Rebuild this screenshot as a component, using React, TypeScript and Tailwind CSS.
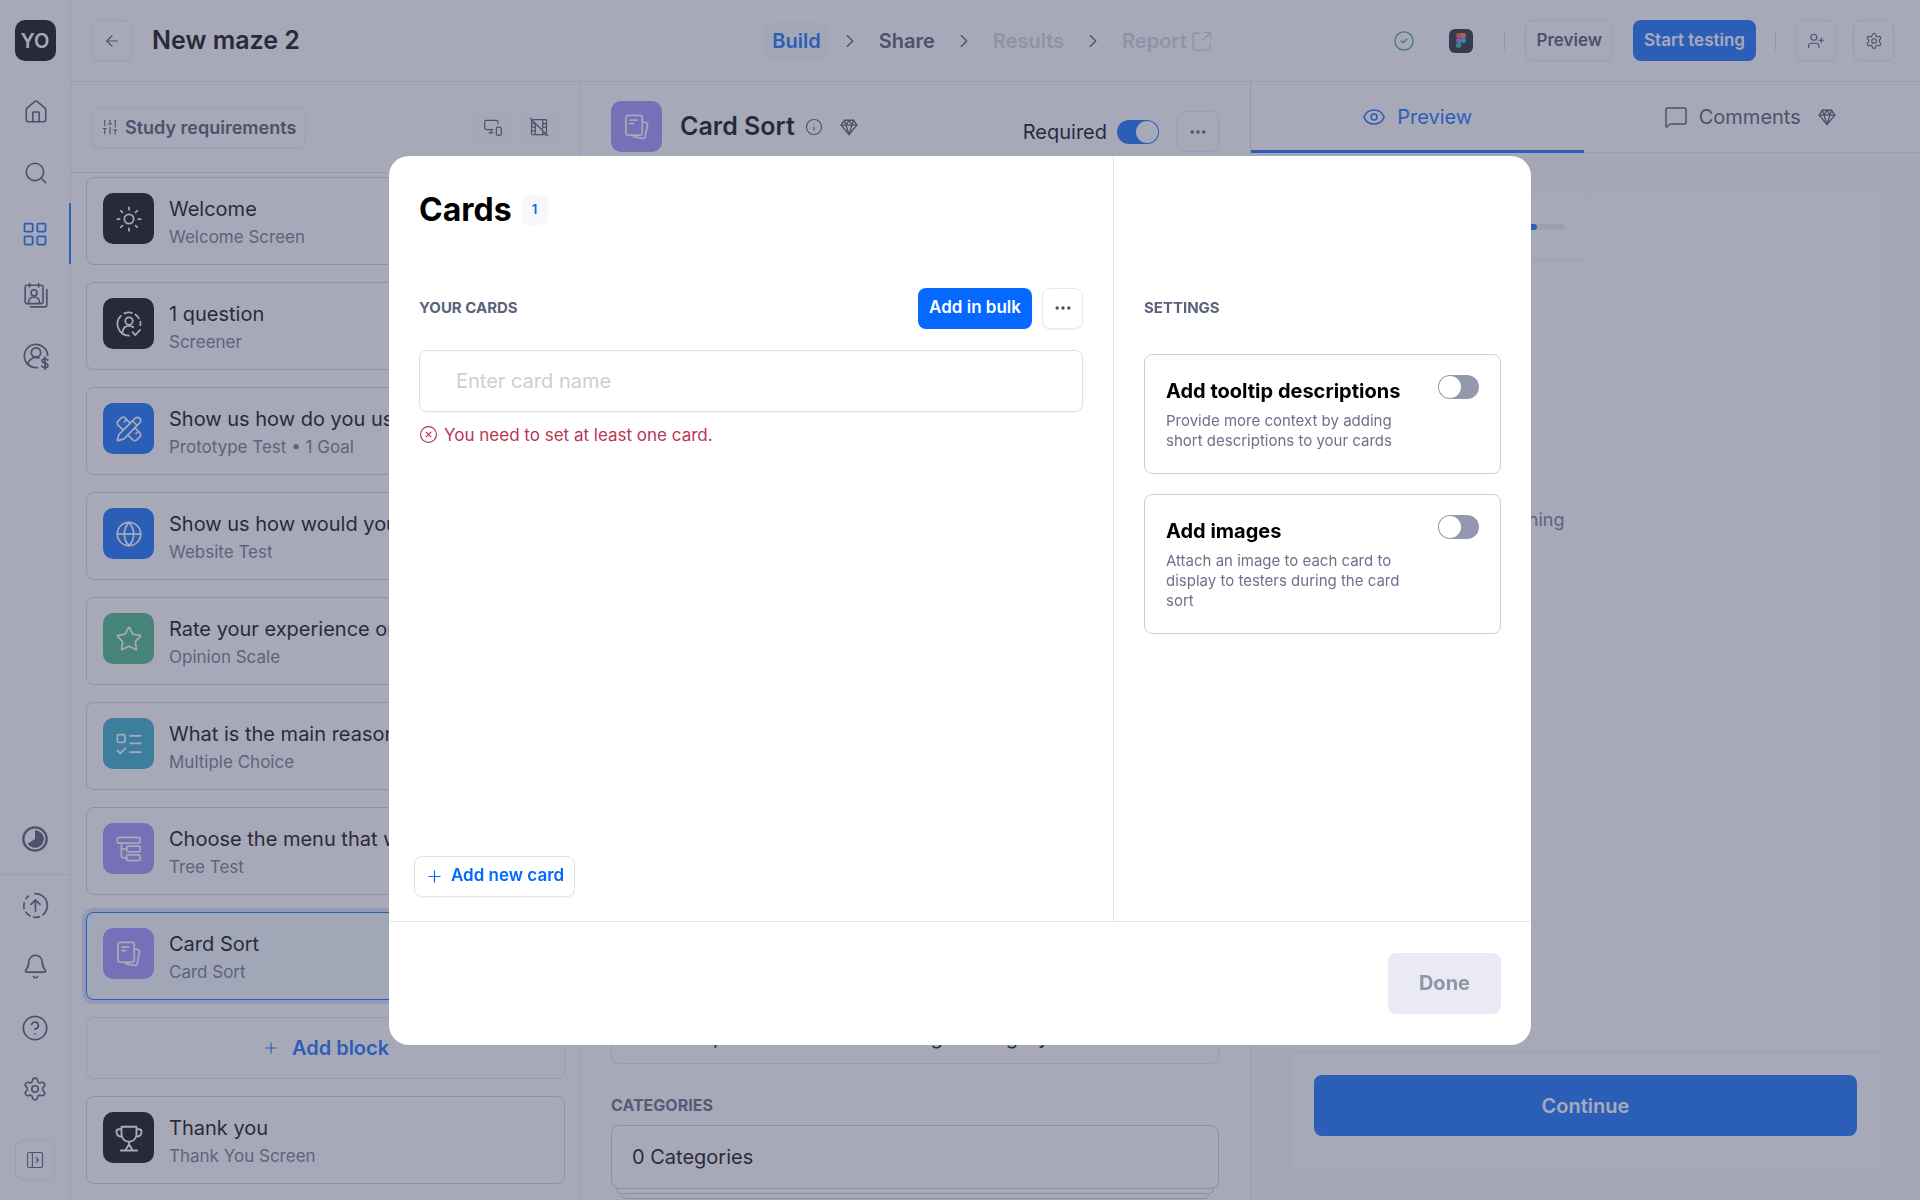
import type { ReactNode } from "react";
import {
  ArrowLeft,
  Bell,
  ChevronRight,
  CircleCheck,
  CircleQuestionMark,
  CircleX,
  Ellipsis,
  Eye,
  Globe,
  House,
  Info,
  LayoutGrid,
  MessageSquare,
  MonitorSmartphone,
  PencilRuler,
  Plus,
  Search,
  Settings,
  SlidersVertical,
  Star,
  Sun,
  UserPlus,
} from "lucide-react";

function Svg({ size = 24, stroke = 1.5, className, children }: { size?: number; stroke?: number; className?: string; children: ReactNode }) {
  return (
    <svg
      width={size}
      height={size}
      viewBox="0 0 24 24"
      fill="none"
      stroke="currentColor"
      strokeWidth={stroke}
      strokeLinecap="round"
      strokeLinejoin="round"
      className={className}
      aria-hidden="true"
    >
      {children}
    </svg>
  );
}

const GemIcon = () => (
  <Svg size={18} stroke={1.8}>
    <path d="M6 3h12l4.500 6.500L12 22 1.500 9.500z" />
    <path d="M1.500 9.500h21M8 9.500 12 22l4-12.500M6 3l2 6.500L12 3l4 6.500L18 3" />
  </Svg>
);

const CardsIcon = ({ size = 28 }: { size?: number }) => (
  <Svg size={size}>
    <rect x="2.500" y="2" width="14" height="17" rx="2" />
    <path d="M6 6h6M6 9h3" />
    <path d="M16.500 7.500 19.500 8.200a2 2 0 0 1 1.500 2.300l-2 9.800a2 2 0 0 1-2.400 1.500L9 20.300" />
  </Svg>
);

const TreeIcon = () => (
  <Svg size={28}>
    <rect x="2" y="2" width="19.500" height="5" rx="1" />
    <rect x="10" y="9.500" width="11.500" height="5" rx="1" />
    <rect x="10" y="17" width="11.500" height="5" rx="1" />
    <path d="M5.500 7v3a2 2 0 0 0 2 2H10M5.500 10v7.500a2 2 0 0 0 2 2H10" />
  </Svg>
);

const ChecklistIcon = () => (
  <Svg size={28}>
    <rect x="2" y="4" width="6.500" height="6.500" rx="1" />
    <path d="m2 17.500 2.500 2.500L9 15.500M13 5h9M13 11.500h9M13 19h9" />
  </Svg>
);

const ScreenerIcon = () => (
  <Svg size={28}>
    <circle cx="12" cy="9.500" r="3.200" />
    <path d="M6.500 19c.300-3.500 2.300-5.500 5.500-5.500 1.500 0 2.700.400 3.700 1.300M15 19l2.300 2.500 4.200-4.500" />
    <path d="M12 22A10 10 0 0 1 5 5M8 2.900A10 10 0 0 1 14.500 2.400M17.500 3.800A10 10 0 0 1 20.500 7.200M21.800 10v3" />
  </Svg>
);

const TrophyIcon = () => (
  <Svg size={30}>
    <path d="M6 3h12v6a6 6 0 0 1-12 0zM6 5H4a2 2 0 0 0-2 2c0 2.500 1.500 4 4.500 4M18 5h2a2 2 0 0 1 2 2c0 2.500-1.500 4-4.500 4M12 15v2l-3 5M12 17l3 5M5.500 22h13" />
  </Svg>
);

const ParticipantsIcon = () => (
  <Svg size={26}>
    <path d="M6 1.500v3M14.500 1.500v3" />
    <rect x="2" y="3" width="16.500" height="17" rx="1.500" />
    <circle cx="10.200" cy="10" r="2.800" />
    <path d="M5 20c0-4 2-6.200 5.200-6.200s5.200 2.200 5.200 6.200M22 7v14a2 2 0 0 1-2 2H7" />
  </Svg>
);

const PanelUserIcon = () => (
  <Svg size={28}>
    <path d="M13 22A10 10 0 1 1 22 11.500" />
    <circle cx="12" cy="9" r="4" />
    <path d="M5 19c.800-3.500 3-5.500 7-5.800 1 0 1.800.200 2.500.500" />
    <path d="M22 15.500c-.500-.800-1.300-1-2.300-1-1.400 0-2.400.600-2.400 1.800 0 2.500 4.900 1.100 4.900 3.800 0 1.200-1.100 1.900-2.500 1.900-1.200 0-2-.400-2.600-1.200M19.700 13v10.500" />
  </Svg>
);

const FilmOffIcon = () => (
  <Svg size={20}>
    <path d="M5 3h15a1 1 0 0 1 1 1v15M20 21H4a1 1 0 0 1-1-1V4M7.500 7.500V21M16.500 3v11M16.500 18v3M3 8h4M3 12h4M3 16.500h4M17 8h4M17 12h4M1.500 1.500l21 21" />
  </Svg>
);

const UsageIcon = () => (
  <Svg size={28} stroke={2}>
    <circle cx="12" cy="12" r="10" />
    <path d="M12 4.500a7.500 7.500 0 1 1-6.300 11.500L12 12z" fill="currentColor" stroke="none" />
  </Svg>
);

const UpgradeIcon = () => (
  <Svg size={27}>
    <path d="M12 17V7.500M8 11l4-4 4 4" />
    <path d="M11.500 1.500A10.500 10.500 0 0 1 18.500 20.300M15.500 22a10.500 10.500 0 0 1-5 .300M7 21.200A10.500 10.500 0 0 1 3.500 18M1.800 14.500a10.500 10.500 0 0 1 .200-5M3.500 6a10.500 10.500 0 0 1 2.200-2.400" />
  </Svg>
);

const ExpandIcon = () => (
  <Svg size={18}>
    <rect x="2" y="2" width="20" height="20" rx="2" />
    <path d="M8.500 2v20M13.500 9l3 3-3 3" />
  </Svg>
);

const OpenIcon = () => (
  <Svg size={22}>
    <path d="M10 3.500H4a1.500 1.500 0 0 0-1.500 1.500v15.500A1.500 1.500 0 0 0 4 22h15.500a1.500 1.500 0 0 0 1.500-1.500V14M15 2.500h6.500V9M21 3l-8.500 8.500" />
  </Svg>
);

function FigmaBadge() {
  return (
    <span className="flex size-6 items-center justify-center rounded-md bg-[#20222c]">
      <svg width="10" height="15" viewBox="0 0 10 15" aria-hidden="true">
        <path d="M2.500 0H5v5H2.500a2.500 2.500 0 0 1 0-5z" fill="#f24e1e" />
        <path d="M5 0h2.500a2.500 2.500 0 0 1 0 5H5z" fill="#ff7262" />
        <path d="M2.500 5H5v5H2.500a2.500 2.500 0 0 1 0-5z" fill="#a259ff" />
        <circle cx="7.500" cy="7.500" r="2.500" fill="#1abcfe" />
        <path d="M2.500 10H5v2.500A2.500 2.500 0 1 1 2.500 10z" fill="#0acf83" />
      </svg>
    </span>
  );
}

const blocks = [
  { title: "Welcome", sub: "Welcome Screen", color: "bg-black", icon: <Sun size={28} strokeWidth={1.5} /> },
  { title: "1 question", sub: "Screener", color: "bg-black", icon: <ScreenerIcon /> },
  { title: "Show us how do you use the product", sub: "Prototype Test • 1 Goal", color: "bg-[#0568fd]", icon: <PencilRuler size={28} strokeWidth={1.5} /> },
  { title: "Show us how would you find the page", sub: "Website Test", color: "bg-[#0568fd]", icon: <Globe size={28} strokeWidth={1.5} /> },
  { title: "Rate your experience on this website", sub: "Opinion Scale", color: "bg-[#3cb482]", icon: <Star size={28} strokeWidth={1.5} /> },
  { title: "What is the main reason for your score", sub: "Multiple Choice", color: "bg-[#28a8c4]", icon: <ChecklistIcon /> },
  { title: "Choose the menu that would fit best", sub: "Tree Test", color: "bg-[#9a8cfc]", icon: <TreeIcon /> },
  { title: "Card Sort", sub: "Card Sort", color: "bg-[#9a8cfc]", icon: <CardsIcon />, active: true },
];

type Block = { title: string; sub: string; color: string; icon: ReactNode; active?: boolean };

function BlockCard({ block }: { block: Block }) {
  return (
    <button
      type="button"
      className={`flex h-[88px] w-full shrink-0 items-start rounded-lg border px-4 pt-[15px] text-left ${
        block.active ? "border-[#0568fd] bg-[#f5faff] ring-4 ring-[#cfe1ff]" : "border-[#d0d0d6] bg-white"
      }`}
    >
      <span className={`flex size-[51px] shrink-0 items-center justify-center rounded-[10px] text-white ${block.color}`}>{block.icon}</span>
      <span className="ml-[15px] min-w-0">
        <span className="block truncate text-[20px] leading-8 text-black">{block.title}</span>
        <span className="block truncate text-[17px] leading-6 text-[#6c718c]">{block.sub}</span>
      </span>
    </button>
  );
}

const topLinks = [
  { label: "Home", icon: <House size={26} strokeWidth={1.5} /> },
  { label: "Search", icon: <Search size={26} strokeWidth={1.5} /> },
  { label: "Projects", icon: <LayoutGrid size={28} strokeWidth={1.5} />, active: true },
  { label: "Participants", icon: <ParticipantsIcon /> },
  { label: "Panel", icon: <PanelUserIcon /> },
];

const bottomLinks = [
  { label: "Upgrade", icon: <UpgradeIcon /> },
  { label: "Notifications", icon: <Bell size={27} strokeWidth={1.5} /> },
  { label: "Help", icon: <CircleQuestionMark size={28} strokeWidth={1.5} /> },
  { label: "Settings", icon: <Settings size={26} strokeWidth={1.5} /> },
];

function Sidebar() {
  return (
    <nav className="flex w-[71px] shrink-0 flex-col items-center border-r border-[#e6e7ee] py-5 text-[#4a4f66]">
      <div className="mb-5 flex h-[41px] w-[41px] items-center justify-center rounded-[10px] bg-black text-[20px] font-semibold text-white">YO</div>
      {topLinks.map((l) => (
        <a
          key={l.label}
          href="#"
          aria-label={l.label}
          className={`-mr-px flex h-[61px] w-[71px] items-center justify-center ${l.active ? "border-r-2 border-[#0568fd] text-[#0568fd]" : ""}`}
        >
          {l.icon}
        </a>
      ))}
      <div className="mt-auto flex h-[71px] w-full items-center justify-center border-b border-[#e6e7ee]">
        <a href="#" aria-label="Usage">
          <UsageIcon />
        </a>
      </div>
      {bottomLinks.map((l) => (
        <a key={l.label} href="#" aria-label={l.label} className="flex h-[61px] w-full items-center justify-center">
          {l.icon}
        </a>
      ))}
      <button type="button" aria-label="Expand sidebar" className="mt-[21px] flex size-10 items-center justify-center rounded-lg border border-[#e6e7ee]">
        <ExpandIcon />
      </button>
    </nav>
  );
}

const smallButton = "flex h-[41px] items-center justify-center rounded-lg border border-[#e8eaf2] bg-white text-[#4a4f66] shadow-xs";

function Header() {
  return (
    <header className="flex h-[82px] shrink-0 items-center border-b border-[#e6e7ee] pr-[26px] pl-5">
      <div className="flex flex-1 items-center">
        <button type="button" aria-label="Back" className={`${smallButton} w-[41px]`}>
          <ArrowLeft size={18} strokeWidth={1.5} />
        </button>
        <h1 className="ml-5 text-[25px] font-semibold text-black">New maze 2</h1>
      </div>
      <nav className="flex items-center gap-[10px] text-[20px] font-semibold text-[#4a4f66]">
        <a href="#" className="rounded-lg bg-[#f5faff] px-2 py-1 text-[#0568fd]">
          Build
        </a>
        <ChevronRight size={22} strokeWidth={1.5} />
        <a href="#" className="px-2">
          Share
        </a>
        <ChevronRight size={22} strokeWidth={1.5} />
        <a href="#" className="px-2 text-[#d0d2de]">
          Results
        </a>
        <ChevronRight size={22} strokeWidth={1.5} />
        <a href="#" className="flex items-center gap-1 px-2 text-[#d0d2de]">
          Report <OpenIcon />
        </a>
      </nav>
      <div className="flex flex-1 items-center justify-end">
        <CircleCheck size={22} strokeWidth={1.5} className="mr-[34px] text-[#3a9b7c]" />
        <FigmaBadge />
        <span className="mx-5 ml-[31px] h-5 w-px bg-[#dcdee8]" />
        <button type="button" className={`${smallButton} px-[10px] text-[17px] font-semibold`}>
          Preview
        </button>
        <button type="button" className="ml-5 h-[41px] rounded-lg bg-[#0568fd] px-[11px] text-[17px] font-semibold text-white">
          Start testing
        </button>
        <span className="mx-[19px] h-5 w-px bg-[#dcdee8]" />
        <button type="button" aria-label="Invite" className={`${smallButton} w-[41px]`}>
          <UserPlus size={18} strokeWidth={1.5} />
        </button>
        <button type="button" aria-label="Maze settings" className={`${smallButton} ml-[17px] w-[41px]`}>
          <Settings size={18} strokeWidth={1.5} />
        </button>
      </div>
    </header>
  );
}

function BlockList() {
  return (
    <section className="flex w-[509px] shrink-0 flex-col border-r border-[#e6e7ee]">
      <div className="flex h-[91px] shrink-0 items-center border-b border-[#e0e1e8] px-5">
        <button type="button" className={`${smallButton} gap-[6px] px-[9px] text-[18px] font-semibold`}>
          <SlidersVertical size={18} strokeWidth={1.5} />
          Study requirements
        </button>
        <span className="ml-auto flex gap-[6px] text-[#4a4f66]">
          <button type="button" aria-label="Devices" className="flex size-10 items-center justify-center rounded-lg bg-[#fdfdfe]">
            <MonitorSmartphone size={20} strokeWidth={1.5} />
          </button>
          <button type="button" aria-label="Recording off" className="flex size-10 items-center justify-center rounded-lg bg-[#fdfdfe]">
            <FilmOffIcon />
          </button>
        </span>
      </div>
      <div className="flex flex-1 flex-col gap-[17px] overflow-hidden pt-1 pr-[14px] pl-[15px]">
        {blocks.map((b) => (
          <BlockCard key={b.title} block={b} />
        ))}
        <button type="button" className="flex h-[62px] shrink-0 items-center justify-center gap-3 rounded-lg border border-[#e3e5ee] text-[20px] font-semibold text-[#0568fd]">
          <Plus size={18} strokeWidth={1.5} />
          Add block
        </button>
        <BlockCard block={{ title: "Thank you", sub: "Thank You Screen", color: "bg-black", icon: <TrophyIcon /> }} />
      </div>
    </section>
  );
}

function Editor() {
  return (
    <section className="flex min-w-0 flex-col px-[31px] pt-[19px]">
      <div className="flex items-center">
        <span className="flex size-[51px] items-center justify-center rounded-[10px] bg-[#9a8cfc] text-white">
          <CardsIcon />
        </span>
        <h2 className="ml-[18px] text-[25px] font-semibold text-black">Card Sort</h2>
        <span className="ml-[10px] flex items-center gap-[17px] text-[#4a4f66]">
          <Info size={18} strokeWidth={1.5} />
          <GemIcon />
        </span>
        <label htmlFor="required" className="mt-[10px] ml-auto text-[20px] text-black">
          Required
        </label>
        <input
          id="required"
          type="checkbox"
          defaultChecked
          className="mt-[10px] ml-[10px] h-6 w-[42px] appearance-none rounded-full bg-[#0568fd] p-px before:ml-auto before:block before:size-[22px] before:rounded-full before:bg-white"
        />
        <button type="button" aria-label="Block menu" className={`${smallButton} mt-[10px] ml-[18px] w-[42px]`}>
          <Ellipsis size={20} />
        </button>
      </div>
      <div className="mt-auto rounded-lg border border-[#e3e5ee] px-5 pt-4 pb-[11px] text-[20px] text-black shadow-xs">
        Allow to place the cards in a single category
      </div>
      <h3 className="mt-[29px] text-[16px] leading-6 font-bold text-[#5c617b]">CATEGORIES</h3>
      <div className="mt-2 flex h-[64px] shrink-0 items-center rounded-lg border border-[#c9ccd8] px-5 text-[20px] text-black">0 Categories</div>
      <div className="mx-[5px] h-[5px] shrink-0 rounded-b-md border border-t-0 border-[#c9ccd8]" />
      <div className="mx-[10px] mb-px h-[5px] shrink-0 rounded-b-md border border-t-0 border-[#c9ccd8]" />
    </section>
  );
}

function PreviewPane() {
  return (
    <aside className="flex min-w-0 flex-col border-l border-[#dcdee8] bg-[#fafafd]">
      <div className="flex h-[71px] shrink-0 bg-white text-[20px]">
        <button type="button" className="flex flex-1 items-center justify-center gap-[11px] border-b-[3px] border-[#0568fd] pt-[2px] text-[#0568fd]">
          <Eye size={24} strokeWidth={1.5} />
          Preview
        </button>
        <button type="button" className="flex flex-1 items-center justify-center border-b border-[#e6e7ee] pr-1 text-[#4a4f66]">
          <MessageSquare size={24} strokeWidth={1.5} />
          <span className="mr-[17px] ml-[11px]">Comments</span>
          <GemIcon />
        </button>
      </div>
      <div className="mx-[41px] mt-[41px] mb-8 flex flex-1 flex-col bg-white">
        <div className="flex flex-1">
          <div className="flex w-1/2 flex-col border-r border-[#f6f6fa]">
            <div className="flex h-[66px] items-center border-b border-[#f0f1f6] px-5">
              <div className="h-[6px] flex-1 rounded-full bg-[#ececf2]">
                <div className="h-[6px] w-[89%] rounded-full bg-[#0568fd]" />
              </div>
            </div>
            <p className="px-5 pt-[246px] text-right text-[18px] text-[#6c718c]">Sort each card by meaning</p>
          </div>
        </div>
        <div className="border-t border-[#eeeff5] px-[22px] pt-[22px] pb-8">
          <button type="button" className="h-[61px] w-full rounded-lg bg-[#0568fd] text-[20px] font-semibold text-white">
            Continue
          </button>
        </div>
      </div>
    </aside>
  );
}

function SettingCard({ id, title, text }: { id: string; title: string; text: string }) {
  return (
    <div className="flex items-start justify-between rounded-lg border border-[#cfcfd4] px-[21px] pt-[19px] pb-[22px]">
      <div className="w-[242px]">
        <label htmlFor={id} className="block text-[20px] leading-[34px] font-bold whitespace-nowrap text-black">
          {title}
        </label>
        <p className="mt-[3px] text-[15px] leading-5 text-[#6c718c]">{text}</p>
      </div>
      <input
        id={id}
        type="checkbox"
        className="mt-px h-6 w-[41px] appearance-none rounded-full bg-[#9498ae] p-px before:block before:size-[22px] before:rounded-full before:bg-white"
      />
    </div>
  );
}

function CardsDialog() {
  return (
    <div className="fixed inset-0 flex items-center justify-center bg-[#505472]/50">
      <div role="dialog" aria-label="Cards" className="flex h-[889px] w-[1142px] flex-col rounded-[20px] bg-white">
        <div className="flex flex-1">
          <div className="flex flex-1 flex-col px-[30px] pt-8 pb-6">
            <div className="flex items-center gap-[10px]">
              <h2 className="text-[32px] leading-[44px] font-bold text-black">Cards</h2>
              <span className="flex h-[30px] w-[26px] items-center justify-center rounded-md bg-[#f6f8fc] text-[13px] font-semibold text-[#0568fd]">1</span>
            </div>
            <div className="mt-14 flex items-center">
              <h3 className="mr-auto text-[15px] font-bold text-[#5c617b]">YOUR CARDS</h3>
              <button type="button" className="h-[41px] rounded-lg bg-[#0568ff] px-[11px] text-[17px] font-semibold text-white">
                Add in bulk
              </button>
              <button type="button" aria-label="More" className={`${smallButton} ml-[10px] w-[41px]`}>
                <Ellipsis size={20} />
              </button>
            </div>
            <input
              type="text"
              aria-label="Card name"
              placeholder="Enter card name"
              className="mt-[21px] h-[62px] rounded-lg border border-[#dddfe8] px-9 text-[20px] text-black shadow-xs outline-none placeholder:text-[#ccced8]"
            />
            <p className="mt-[9px] flex items-center gap-[6px] text-[17px] leading-7 text-[#b93655]">
              <CircleX size={19} strokeWidth={1.5} />
              You need to set at least one card.
            </p>
            <button
              type="button"
              className="mt-auto -ml-[5px] flex h-[41px] items-center gap-[7px] self-start rounded-lg border border-[#e0e2ec] px-[10px] text-[17px] font-semibold text-[#0568fd] shadow-xs"
            >
              <Plus size={19} strokeWidth={1.5} />
              Add new card
            </button>
          </div>
          <div className="flex w-[418px] flex-col gap-5 border-l border-[#e4e6ea] px-[30px]">
            <h3 className="mt-[140px] mb-[14px] text-[15px] leading-6 font-bold text-[#5c617b]">SETTINGS</h3>
            <SettingCard id="tooltips" title="Add tooltip descriptions" text="Provide more context by adding short descriptions to your cards" />
            <SettingCard id="images" title="Add images" text="Attach an image to each card to display to testers during the card sort" />
          </div>
        </div>
        <div className="flex h-[124px] items-center justify-end border-t border-[#e4e6ea] px-[30px]">
          <button type="button" disabled className="h-[61px] rounded-lg bg-[#e9eaf3] px-[31px] text-[20px] font-bold text-[#9295a8]">
            Done
          </button>
        </div>
      </div>
    </div>
  );
}

export default function App() {
  return (
    <div className="flex h-screen overflow-hidden bg-white font-['Inter','Liberation_Sans',sans-serif]">
      <Sidebar />
      <div className="flex min-w-0 flex-1 flex-col">
        <Header />
        <main className="flex min-h-0 flex-1">
          <BlockList />
          <div className="grid min-w-0 flex-1 grid-cols-2">
            <Editor />
            <PreviewPane />
          </div>
        </main>
      </div>
      <CardsDialog />
    </div>
  );
}
